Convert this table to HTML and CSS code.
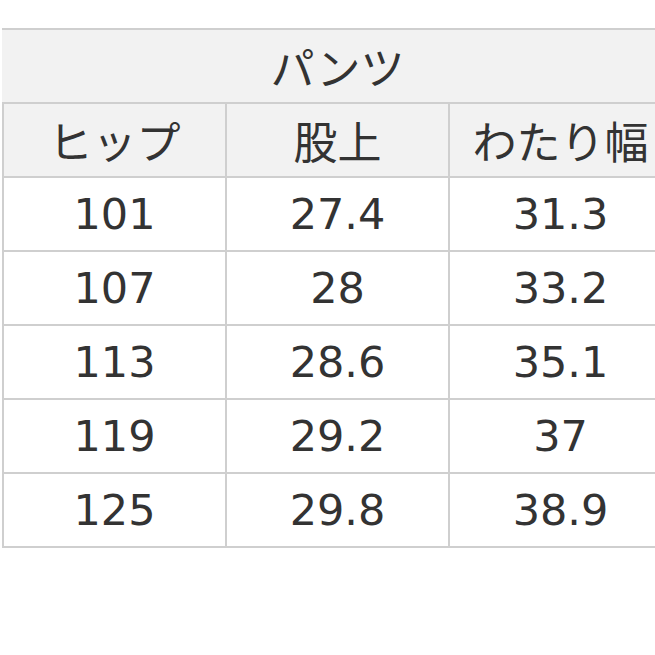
FILE: index.html
```html
<!DOCTYPE html>
<html lang="ja">
<head>
<meta charset="utf-8">
<link rel="stylesheet" href="styles.css">
</head>
<body>
<div class="wrap">
<table class="size">
  <thead>
    <tr><th class="top" colspan="3">パンツ</th></tr>
    <tr><th>ヒップ</th><th>股上</th><th>わたり幅</th></tr>
  </thead>
  <tbody>
    <tr><td>101</td><td>27.4</td><td>31.3</td></tr>
    <tr><td>107</td><td>28</td><td>33.2</td></tr>
    <tr><td>113</td><td>28.6</td><td>35.1</td></tr>
    <tr><td>119</td><td>29.2</td><td>37</td></tr>
    <tr><td>125</td><td>29.8</td><td>38.9</td></tr>
  </tbody>
</table>
</div>
</body>
</html>
```

FILE: styles.css
```css
html, body {
  margin: 0;
  padding: 0;
  background: #ffffff;
  overflow: hidden;
}
.wrap {
  width: 655px;
  height: 655px;
  overflow: hidden;
  padding-top: 28px;
  padding-left: 2px;
  box-sizing: border-box;
}
.size {
  border-collapse: collapse;
  table-layout: fixed;
  width: 671px;
  font-family: "DejaVu Sans", "Noto Sans CJK JP", sans-serif;
  font-size: 43px;
  color: #333333;
}
.size th, .size td {
  border: 2px solid #cfcfcf;
  height: 72px;
  padding: 0;
  text-align: center;
  vertical-align: middle;
  font-weight: normal;
  line-height: 1;
}
.size th {
  background: #f2f2f2;
  font-family: "Noto Sans CJK JP", sans-serif;
  font-size: 44px;
}
.size th.top {
  border-left-color: #f2f2f2;
}
```
